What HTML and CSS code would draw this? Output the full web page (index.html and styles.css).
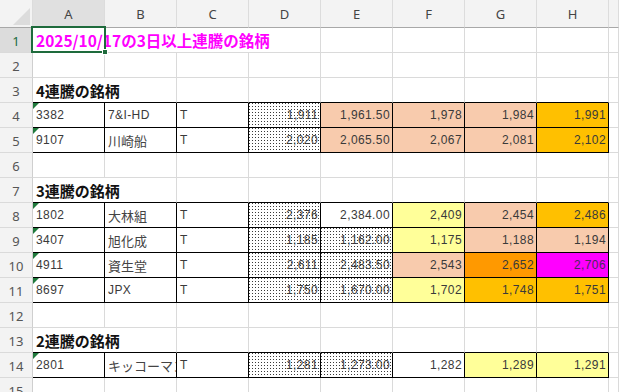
FILE: index.html
```html
<!DOCTYPE html>
<html lang="ja">
<head>
<meta charset="utf-8">
<link rel="stylesheet" href="styles.css">
</head>
<body>
<div class="sheet">
  <div class="row hdr">
    <div class="c rh corner"><span class="tri"></span></div>
    <div class="c ch sel">A</div><div class="c ch">B</div><div class="c ch">C</div><div class="c ch">D</div>
    <div class="c ch">E</div><div class="c ch">F</div><div class="c ch">G</div><div class="c ch">H</div><div class="c ch"></div>
  </div>
  <div class="row">
    <div class="c rh rsel">1</div>
    <div class="c title span4">2025/10/17の3日以上連騰の銘柄</div>
    <div class="c"></div><div class="c"></div><div class="c"></div><div class="c"></div><div class="c"></div>
  </div>
  <div class="row">
    <div class="c rh">2</div>
    <div class="c"></div><div class="c"></div><div class="c"></div><div class="c"></div><div class="c"></div><div class="c"></div><div class="c"></div><div class="c"></div><div class="c"></div>
  </div>
  <div class="row">
    <div class="c rh">3</div>
    <div class="c head span2 tb">4連騰の銘柄</div>
    <div class="c tb"></div><div class="c tb"></div><div class="c tb"></div><div class="c tb"></div><div class="c tb"></div><div class="c tb"></div><div class="c"></div>
  </div>
  <div class="row">
    <div class="c rh">4</div>
    <div class="c t code">3382</div><div class="c t">7&amp;I-HD</div><div class="c t">T</div>
    <div class="c t n dot">1,911</div><div class="c t n peach">1,961.50</div><div class="c t n peach">1,978</div><div class="c t n peach">1,984</div><div class="c t n gold">1,991</div><div class="c"></div>
  </div>
  <div class="row">
    <div class="c rh">5</div>
    <div class="c t code">9107</div><div class="c t jp">川崎船</div><div class="c t">T</div>
    <div class="c t n dot">2,020</div><div class="c t n peach">2,065.50</div><div class="c t n peach">2,067</div><div class="c t n peach">2,081</div><div class="c t n gold">2,102</div><div class="c"></div>
  </div>
  <div class="row">
    <div class="c rh">6</div>
    <div class="c"></div><div class="c"></div><div class="c"></div><div class="c"></div><div class="c"></div><div class="c"></div><div class="c"></div><div class="c"></div><div class="c"></div>
  </div>
  <div class="row">
    <div class="c rh">7</div>
    <div class="c head span2 tb">3連騰の銘柄</div>
    <div class="c tb"></div><div class="c tb"></div><div class="c tb"></div><div class="c tb"></div><div class="c tb"></div><div class="c tb"></div><div class="c"></div>
  </div>
  <div class="row">
    <div class="c rh">8</div>
    <div class="c t code">1802</div><div class="c t jp">大林組</div><div class="c t">T</div>
    <div class="c t n dot">2,376</div><div class="c t n">2,384.00</div><div class="c t n yellow">2,409</div><div class="c t n peach">2,454</div><div class="c t n gold">2,486</div><div class="c"></div>
  </div>
  <div class="row">
    <div class="c rh">9</div>
    <div class="c t code">3407</div><div class="c t jp">旭化成</div><div class="c t">T</div>
    <div class="c t n dot">1,185</div><div class="c t n dot">1,162.00</div><div class="c t n yellow">1,175</div><div class="c t n peach">1,188</div><div class="c t n peach">1,194</div><div class="c"></div>
  </div>
  <div class="row">
    <div class="c rh">10</div>
    <div class="c t code">4911</div><div class="c t jp">資生堂</div><div class="c t">T</div>
    <div class="c t n dot">2,611</div><div class="c t n dot">2,483.50</div><div class="c t n peach">2,543</div><div class="c t n orange">2,652</div><div class="c t n magenta">2,706</div><div class="c"></div>
  </div>
  <div class="row">
    <div class="c rh">11</div>
    <div class="c t code">8697</div><div class="c t">JPX</div><div class="c t">T</div>
    <div class="c t n dot">1,750</div><div class="c t n dot">1,670.00</div><div class="c t n yellow">1,702</div><div class="c t n gold">1,748</div><div class="c t n gold">1,751</div><div class="c"></div>
  </div>
  <div class="row">
    <div class="c rh">12</div>
    <div class="c"></div><div class="c"></div><div class="c"></div><div class="c"></div><div class="c"></div><div class="c"></div><div class="c"></div><div class="c"></div><div class="c"></div>
  </div>
  <div class="row">
    <div class="c rh">13</div>
    <div class="c head span2 tb">2連騰の銘柄</div>
    <div class="c tb"></div><div class="c tb"></div><div class="c tb"></div><div class="c tb"></div><div class="c tb"></div><div class="c tb"></div><div class="c"></div>
  </div>
  <div class="row">
    <div class="c rh">14</div>
    <div class="c t code">2801</div><div class="c t jp kana">キッコーマン</div><div class="c t">T</div>
    <div class="c t n dot">1,281</div><div class="c t n dot">1,273.00</div><div class="c t n">1,282</div><div class="c t n yellow">1,289</div><div class="c t n yellow">1,291</div><div class="c"></div>
  </div>
  <div class="row">
    <div class="c rh">15</div>
    <div class="c"></div><div class="c"></div><div class="c"></div><div class="c"></div><div class="c"></div><div class="c"></div><div class="c"></div><div class="c"></div><div class="c"></div>
  </div>
  <div class="selbox"><span class="handle"></span></div>
</div>
</body>
</html>
```
FILE: styles.css
```css
html, body {
  margin: 0;
  padding: 0;
  background: #fff;
  overflow: hidden;
}
.sheet {
  position: relative;
  width: 619px;
  height: 392px;
  overflow: hidden;
  font-family: "Liberation Sans", "Noto Sans CJK JP", sans-serif;
  font-size: 12px;
  color: #3a3a3a;
}
.row {
  display: grid;
  grid-template-columns: 33px repeat(8, 72px) 1fr;
  height: 25px;
}
.row.hdr {
  height: 28px;
}
.c {
  box-sizing: border-box;
  border-right: 1px solid #dadada;
  border-bottom: 1px solid #dadada;
  display: flex;
  align-items: center;
  padding: 0 3px;
  white-space: nowrap;
  overflow: hidden;
  position: relative;
}
.hdr .c {
  background: #f3f3f3;
  border-bottom: 1px solid #a8a8a8;
  border-right: 1px solid #dcdcdc;
  justify-content: center;
  font-family: "Noto Sans", "Liberation Sans", sans-serif;
  font-size: 13px;
  color: #444;
  padding-top: 1px;
}
.hdr .c.sel {
  background: #e0e0e0;
  color: #444;
}
.rh {
  background: #f3f3f3;
  border-right: 1px solid #cfcfcf;
  border-bottom: 1px solid #dadada;
  justify-content: center;
  font-family: "Noto Sans", "Liberation Sans", sans-serif;
  font-size: 13px;
  color: #555;
  padding: 1px 0 0 0;
}
.rh.rsel {
  background: #dcdcdc;
  color: #1e6b3c;
}
.corner .tri {
  position: absolute;
  right: 2px;
  bottom: 2px;
  width: 0;
  height: 0;
  border-left: 17px solid transparent;
  border-bottom: 17px solid #dcdcdc;
}
.span4 { grid-column: span 4; }
.span2 { grid-column: span 2; }
.title {
  font-family: "Noto Sans CJK JP", sans-serif;
  font-weight: bold;
  font-size: 15.5px;
  color: #f0f;
  padding-left: 3px;
  overflow: visible;
}
.head {
  font-family: "Noto Sans CJK JP", sans-serif;
  font-weight: bold;
  font-size: 15px;
  color: #111;
}
.tb {
  border-bottom-color: #000;
}
.t {
  border-right-color: #000;
  border-bottom-color: #000;
  letter-spacing: 0.4px;
}
.jp {
  font-family: "Noto Sans CJK JP", sans-serif;
  font-size: 13px;
  letter-spacing: 0;
  color: #444;
}
.kana {
  overflow: hidden;
}
.n {
  justify-content: flex-end;
  padding-right: 2px;
}
.code::before {
  content: "";
  position: absolute;
  left: 0;
  top: 0;
  width: 0;
  height: 0;
  border-top: 6px solid #1f7a3c;
  border-right: 6px solid transparent;
}
.dot {
  background-color: #fff;
  background-image: conic-gradient(from 270deg at 1px 1px, #3a3a3a 90deg, transparent 0);
  background-size: 3px 3px;
}
.peach { background: #f8cbad; }
.gold { background: #ffc000; }
.yellow { background: #ffff99; }
.orange { background: #ff9900; }
.magenta { background: #ff00ff; color: #4a2a5a; }
.selbox {
  position: absolute;
  left: 31px;
  top: 26px;
  width: 75px;
  height: 27px;
  box-sizing: border-box;
  border: 2px solid #1e6b3c;
}
.handle {
  position: absolute;
  right: -4px;
  bottom: -4px;
  width: 6px;
  height: 6px;
  box-sizing: border-box;
  background: #1e6b3c;
  border: 1px solid #fff;
}
```
